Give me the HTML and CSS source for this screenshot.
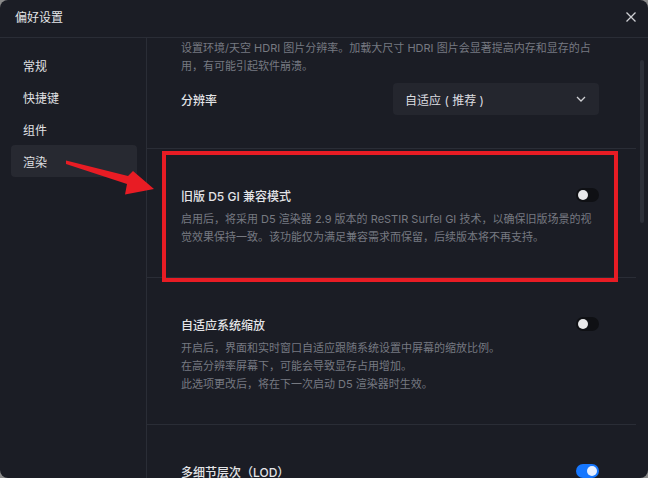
FILE: index.html
```html
<!DOCTYPE html>
<html lang="zh-CN">
<head>
<meta charset="utf-8">
<title>偏好设置</title>
<link rel="stylesheet" href="styles.css">
</head>
<body>
<div class="window">
  <header class="titlebar">
    <span class="title">偏好设置</span>
    <svg class="close" width="12" height="12" viewBox="0 0 12 12"><path d="M1.5 1.5 L10.5 10.5 M10.5 1.5 L1.5 10.5" stroke="#cfd0d4" stroke-width="1.3" fill="none"/></svg>
  </header>
  <div class="body">
    <nav class="sidebar">
      <div class="nav-item">常规</div>
      <div class="nav-item">快捷键</div>
      <div class="nav-item">组件</div>
      <div class="nav-item active">渲染</div>
    </nav>
    <main class="content">
      <section class="section first">
        <p class="desc">设置环境/天空 HDRI 图片分辨率。加载大尺寸 HDRI 图片会显著提高内存和显存的占用，有可能引起软件崩溃。</p>
        <div class="row">
          <span class="label">分辨率</span>
          <div class="select">
            <span>自适应 ( 推荐 )</span>
            <svg width="10" height="6" viewBox="0 0 10 6"><path d="M1 1 L5 5 L9 1" stroke="#cfd0d4" stroke-width="1.3" fill="none"/></svg>
          </div>
        </div>
      </section>
      <section class="section">
        <div class="head">
          <span class="label">旧版 D5 GI 兼容模式</span>
          <span class="toggle"></span>
        </div>
        <p class="desc">启用后，将采用 D5 渲染器 2.9 版本的 ReSTIR Surfel GI 技术，以确保旧版场景的视觉效果保持一致。该功能仅为满足兼容需求而保留，后续版本将不再支持。</p>
      </section>
      <section class="section">
        <div class="head">
          <span class="label">自适应系统缩放</span>
          <span class="toggle"></span>
        </div>
        <p class="desc">开启后，界面和实时窗口自适应跟随系统设置中屏幕的缩放比例。<br>在高分辨率屏幕下，可能会导致显存占用增加。<br>此选项更改后，将在下一次启动 D5 渲染器时生效。</p>
      </section>
      <section class="section">
        <div class="head">
          <span class="label">多细节层次（LOD）</span>
          <span class="toggle on"></span>
        </div>
      </section>
      <div class="scrollbar"></div>
    </main>
  </div>
  <div class="highlight"></div>
  <svg class="arrow" width="648" height="478" viewBox="0 0 648 478">
    <polygon points="66,160.5 128,176 133,171 154,189 125,194.5 127,184 66,164" fill="#e81c24"/>
  </svg>
</div>
</body>
</html>
```
FILE: styles.css
```css
html, body {
  margin: 0;
  padding: 0;
  width: 648px;
  height: 478px;
  overflow: hidden;
  background: #8a8a8a;
}
.window {
  position: relative;
  width: 648px;
  height: 478px;
  background: #1b1d25;
  border-radius: 8px;
  overflow: hidden;
  font-family: "Inter", "Noto Sans CJK SC", "Noto Sans", sans-serif;
  color: #e2e3e6;
  display: flex;
  flex-direction: column;
}
.titlebar {
  height: 37px;
  flex: none;
  border-bottom: 1px solid #2a2d36;
  display: flex;
  align-items: center;
  justify-content: space-between;
  padding: 0 11px 0 15px;
}
.title {
  font-size: 12px;
  color: #e4e5e8;
  line-height: 16px;
  margin-top: -2px;
}
.close { display: block; margin-top: -4px; }
.body {
  flex: 1;
  display: flex;
  min-height: 0;
}
.sidebar {
  width: 147px;
  flex: none;
  border-right: 1px solid #2a2d36;
  padding-top: 11px;
  box-sizing: border-box;
}
.nav-item {
  margin-left: 11px;
  width: 126px;
  height: 32px;
  box-sizing: border-box;
  padding-left: 12px;
  display: flex;
  align-items: center;
  font-size: 12px;
  color: #e0e1e4;
  border-radius: 4px;
}
.nav-item.active {
  background: #272931;
}
.content {
  flex: 1;
  position: relative;
  overflow: hidden;
  padding-right: 12px;
}
.section {
  border-bottom: 1px solid #2a2d36;
  padding: 36px 37px 31px 34px;
}
.section.first {
  padding-top: 1px;
  padding-bottom: 33px;
}
.desc {
  margin: 0;
  font-size: 11px;
  line-height: 18px;
  color: #767981;
}
.head {
  display: flex;
  align-items: center;
  justify-content: space-between;
  height: 20px;
  margin-bottom: 5px;
}
.label {
  font-size: 12px;
  font-weight: 500;
  color: #e3e4e7;
}
.row {
  display: flex;
  align-items: center;
  justify-content: space-between;
  margin-top: 8px;
}
.select {
  width: 206px;
  height: 32px;
  box-sizing: border-box;
  background: #24262e;
  border-radius: 4px;
  display: flex;
  align-items: center;
  justify-content: space-between;
  padding: 0 13px 0 12px;
  font-size: 12px;
  color: #dcdde0;
}
.toggle {
  width: 23px;
  height: 14px;
  border-radius: 7px;
  background: #0f1014;
  position: relative;
  flex: none;
}
.toggle::after {
  content: "";
  position: absolute;
  left: 2px;
  top: 2px;
  width: 10px;
  height: 10px;
  border-radius: 50%;
  background: #e8e8ea;
}
.toggle.on {
  background: #1677ff;
}
.toggle.on::after {
  left: 11px;
  background: #e6efff;
}
.scrollbar {
  position: absolute;
  right: 4px;
  top: 22px;
  width: 4px;
  height: 163px;
  border-radius: 2px;
  background: #2c2f38;
}
.highlight {
  position: absolute;
  left: 162px;
  top: 151px;
  width: 456px;
  height: 131px;
  box-sizing: border-box;
  border: 4px solid #e81c24;
  pointer-events: none;
}
.arrow {
  position: absolute;
  left: 0;
  top: 0;
  pointer-events: none;
}
```
